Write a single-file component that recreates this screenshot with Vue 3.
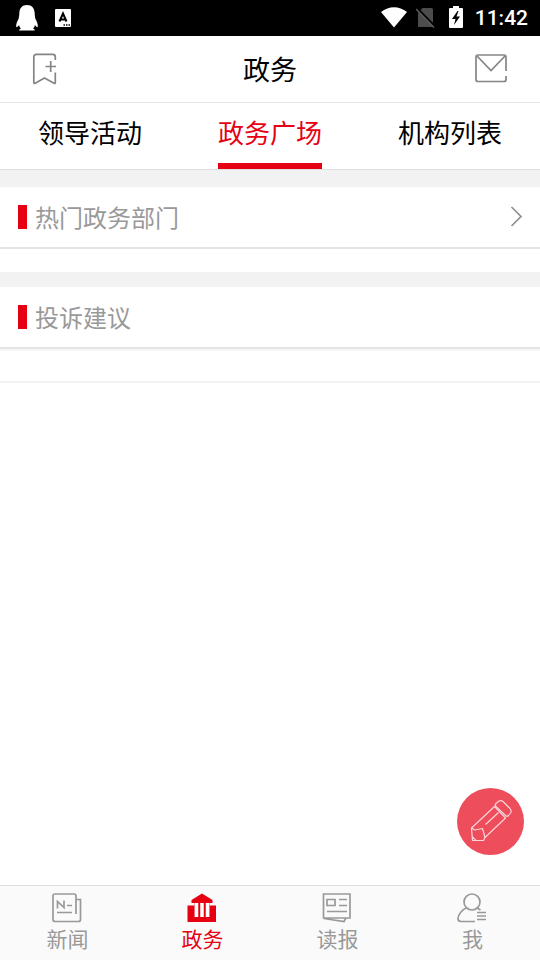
<script setup>
import { ref } from 'vue'

const tabs = ['领导活动', '政务广场', '机构列表']
const activeTab = ref('政务广场')

const navItems = [
  { id: 'news', label: '新闻' },
  { id: 'gov', label: '政务' },
  { id: 'paper', label: '读报' },
  { id: 'me', label: '我' },
]
const activeNav = ref('gov')
</script>

<template>
  <div class="screen">
    <div class="status-bar">
      <div class="status-group notices">
        <svg width="24" height="28" viewBox="0 0 24 28" fill="#fff" aria-hidden="true">
          <path d="M12 1C7 1 4.500 4 4.300 9.500C4.200 12 4 13 3.500 15C2 18 1 20 1.200 22.500C1.400 24 2.700 23 4 21C4.500 23 5.200 24 6 24.500C4.500 25.300 4 26 4.300 26.500H19.700C20 26 19.500 25.300 18 24.500C18.800 24 19.500 23 20 21C21.300 23 22.600 24 22.800 22.500C23 20 22 18 20.500 15C20 13 19.800 12 19.700 9.500C19.500 4 17 1 12 1Z" />
        </svg>
        <svg width="16" height="18" viewBox="0 0 16 18" aria-hidden="true">
          <rect width="16" height="18" rx="1" fill="#fff" />
          <path d="M4.500 12.500L8 4.500L11.500 12.500M5.800 10.500H10.200" fill="none" stroke="#000" stroke-width="2" />
          <path d="M8.500 16H15" stroke="#000" stroke-width="1.500" stroke-dasharray="1.500 1" />
        </svg>
      </div>
      <div class="status-group">
        <svg width="26" height="22" viewBox="0 0 26 22" aria-hidden="true">
          <path d="M0 5C8 -1.300 18 -1.300 26 5L13 20.500Z" fill="#fff" />
        </svg>
        <svg class="sim" width="20" height="22" viewBox="0 0 20 22" aria-hidden="true">
          <path d="M6.500 1H15.500Q17 1 17 2.500V20H2V6Z" fill="#4c4c4c" />
          <path d="M1 1L19.500 20" stroke="#000" stroke-width="2" />
          <path d="M0 2L18 20.500" stroke="#5c5c5c" stroke-width="1.500" />
        </svg>
        <svg class="battery" width="14" height="24" viewBox="0 0 14 24" aria-hidden="true">
          <path d="M4 0H10V2H13Q14 2 14 3V21Q14 22 13 22H1Q0 22 0 21V3Q0 2 1 2H4Z" fill="#fff" />
          <path d="M8.500 5L3 13H6.500L5 19L11 10.500H7.500L9.500 5Z" fill="#000" />
        </svg>
        <span class="clock">11:42</span>
      </div>
    </div>

    <header class="title-bar">
      <button class="icon-button" type="button" aria-label="收藏">
        <svg width="26" height="34" viewBox="0 0 26 34" fill="none" stroke="#858585" stroke-width="1.700" aria-hidden="true">
          <path d="M23.300 8V5Q23.300 2.300 20.600 2.300H4.400Q1.800 2.300 1.800 5V30.500Q1.800 32 3.200 31.200L12.500 26L22 31.200Q23.300 32 23.300 30.500V20.500M18.700 9V20M13.500 14.500H24" />
        </svg>
      </button>
      <h1>政务</h1>
      <button class="icon-button" type="button" aria-label="消息">
        <svg width="34" height="30" viewBox="0 0 34 30" fill="none" stroke="#858585" stroke-width="1.700" aria-hidden="true">
          <path d="M32 17V3Q32 1 30 1H4Q2 1 2 3V25.500Q2 27.500 4 27.500H30Q32 27.500 32 25.500V22M2.500 1.500L17 16.500L31.500 1.500" />
        </svg>
      </button>
    </header>

    <nav class="tabs" aria-label="政务">
      <button
        v-for="tab in tabs"
        :key="tab"
        type="button"
        class="tab"
        :class="{ active: tab === activeTab }"
        @click="activeTab = tab"
      >
        <span>{{ tab }}</span>
      </button>
    </nav>

    <main>
      <section class="block">
        <a class="heading" href="#departments">
          <h2>热门政务部门</h2>
          <svg width="14" height="22" viewBox="0 0 14 22" fill="none" stroke="#8f8f8f" stroke-width="1.700" aria-hidden="true">
            <path d="M1.500 1L11 10.500L1.500 20" />
          </svg>
        </a>
        <div class="list"></div>
      </section>
      <section class="block complaints">
        <div class="heading">
          <h2>投诉建议</h2>
        </div>
        <div class="list"></div>
      </section>
    </main>

    <button class="compose" type="button" aria-label="写建议">
      <svg width="45" height="45" viewBox="0 0 45 45" fill="none" stroke="#fbd5da" stroke-width="1.200" stroke-linejoin="round" aria-hidden="true">
        <path d="M3.500 29L26.500 7.500L37.500 19L17 38.500L15.500 41.500L4.500 41.500ZM3.500 29L7 31L14.500 29.500L17 38.500M4 37.500L8 41.500M17.500 25.500L30.500 13.500" />
        <path d="M28 4.500L31 2Q33 1 35 2.500L42 9.500Q44 12 42.500 14L40.500 16.500Q39 18 37.500 16.500L28 7.500Q26.500 6 28 4.500Z" />
      </svg>
    </button>

    <nav class="bottom-nav" aria-label="主导航">
      <button
        v-for="item in navItems"
        :key="item.id"
        type="button"
        class="nav-item"
        :class="{ active: item.id === activeNav }"
        @click="activeNav = item.id"
      >
        <svg width="31" height="30" viewBox="0 0 31 30" fill="none" stroke="currentColor" stroke-width="1.700" aria-hidden="true">
          <template v-if="item.id === 'news'">
            <path d="M24 21V3Q24 1 22 1H3Q1 1 1 3V26.500Q1 28.500 3 28.500H26.500Q28.500 28.500 28.500 26.500V6.500H24M5 19.500H20M15 12.500H20" />
            <path d="M5.500 15.500V8.500L12 14.500V7.500" />
          </template>
          <template v-else-if="item.id === 'gov'">
            <path d="M15 0.500L25.500 7V10H4.500V7ZM0.500 12.500H7.500V24H22.500V12.500H29V29H0.500Z" fill="currentColor" stroke="none" />
            <path d="M7.500 9H22.500V24H7.500Z" fill="currentColor" stroke="none" />
            <path d="M9.500 10V24M15 10V24M20.500 10V24" stroke="#fff" stroke-width="3.500" />
          </template>
          <template v-else-if="item.id === 'paper'">
            <path d="M1.500 1H28V25H1.500ZM5 6.500H13V12.500H5ZM17 6.500H25M17 12.500H25M5 18.500H25M2 25.500L22 28.500L24 25" />
          </template>
          <template v-else>
            <path d="M10 14.500C5.500 16.500 1 21.500 1 25.500Q1 28.500 4 28.500H18M19.500 14.500L23.500 17M20 19.500H29M20 23H29M20 26.500H29" />
            <circle cx="15" cy="9" r="8" />
          </template>
        </svg>
        <span>{{ item.label }}</span>
      </button>
    </nav>
  </div>
</template>

<style>
body {
  margin: 0;
  background: #fff;
}
</style>

<style scoped>
.screen {
  display: flex;
  flex-direction: column;
  min-height: 100vh;
  background: #fff;
  color: #000;
  font-family: "Noto Sans CJK SC", sans-serif;
}

button {
  margin: 0;
  padding: 0;
  border: 0;
  background: none;
  color: inherit;
  font: inherit;
  cursor: pointer;
}

svg {
  display: block;
  flex: none;
}

h1,
h2 {
  margin: 0;
  font-weight: 400;
}

.status-bar {
  display: flex;
  align-items: center;
  justify-content: space-between;
  height: 36px;
  padding: 0 12px 0 15px;
  background: #000;
  color: #fff;
}

.status-group {
  display: flex;
  align-items: center;
}

.notices {
  gap: 16px;
}

.sim {
  margin-left: 9px;
}

.battery {
  margin: 0 12px 0 13px;
}

.clock {
  font-family: Roboto, sans-serif;
  font-size: 21px;
  font-weight: 500;
  line-height: 38px;
}

.title-bar {
  display: grid;
  grid-template-columns: 1fr auto 1fr;
  align-items: center;
  height: 66px;
  padding: 0 32px;
  border-bottom: 1px solid #e5e5e5;
}

.icon-button:last-child {
  justify-self: end;
}

.title-bar h1 {
  font-size: 27px;
  line-height: 40px;
}

.tabs {
  display: grid;
  grid-template-columns: repeat(3, 1fr);
  border-bottom: 1px solid #dfdfdf;
}

.tab {
  display: flex;
  justify-content: center;
  font-size: 26px;
  line-height: 58px;
}

.tab span {
  padding-bottom: 2px;
  border-bottom: 6px solid transparent;
}

.tab.active {
  color: #e60012;
}

.tab.active span {
  border-bottom-color: #e60012;
}

main {
  flex: 1;
}

.block {
  border-top: 17px solid #f2f2f2;
}

.heading {
  display: flex;
  align-items: center;
  justify-content: space-between;
  height: 60px;
  padding: 0 16px 0 18px;
  border-bottom: 2px solid #e3e3e3;
  color: #999;
  text-decoration: none;
}

.heading h2 {
  display: flex;
  align-items: center;
  gap: 8px;
  font-size: 24px;
  line-height: 36px;
}

.heading h2::before {
  content: "";
  width: 9px;
  height: 24px;
  background: #e60012;
}

.list {
  height: 23px;
}

.complaints {
  border-top-width: 15px;
}

.complaints .list {
  height: 30px;
  border-top: 2px solid #f5f5f5;
  border-bottom: 2px solid #f2f2f2;
}

.compose {
  position: fixed;
  right: 16px;
  bottom: 105px;
  display: flex;
  align-items: center;
  justify-content: center;
  width: 67px;
  height: 67px;
  border-radius: 50%;
  background: #ee4d5c;
}

.bottom-nav {
  position: sticky;
  bottom: 0;
  display: grid;
  grid-template-columns: repeat(4, 1fr);
  border-top: 1px solid #dfdfdf;
  background: #fafafa;
}

.nav-item {
  display: flex;
  flex-direction: column;
  align-items: center;
  height: 74px;
  padding-top: 7px;
  color: #999;
  font-size: 21px;
  line-height: 30px;
}

.nav-item.active {
  color: #e60012;
}
</style>
